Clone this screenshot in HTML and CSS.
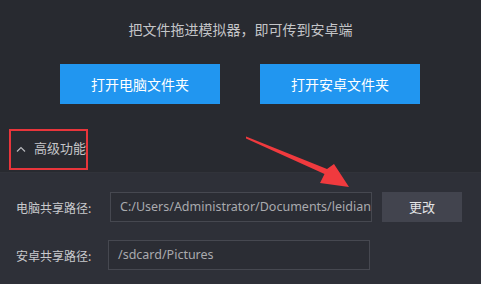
FILE: index.html
```html
<!DOCTYPE html>
<html>
<head>
<meta charset="utf-8">
<link rel="stylesheet" href="styles.css">
</head>
<body>
<div class="win">
  <div class="top">
    <div class="hint">把文件拖进模拟器，即可传到安卓端</div>
    <div class="btns">
      <div class="pbtn">打开电脑文件夹</div>
      <div class="pbtn">打开安卓文件夹</div>
    </div>
    <div class="adv">
      <div class="advbox">
        <svg class="chev" width="10" height="6" viewBox="0 0 10 6"><path d="M1 5.5 L5 1.5 L9 5.5" fill="none" stroke="#b8b9bd" stroke-width="1.2"/></svg>
        <span>高级功能</span>
      </div>
    </div>
  </div>
  <div class="bottom">
    <div class="row r1">
      <div class="label">电脑共享路径:</div>
      <div class="input in1">C:/Users/Administrator/Documents/leidian/Pictures</div>
      <div class="sbtn">更改</div>
    </div>
    <div class="row r2">
      <div class="label">安卓共享路径:</div>
      <div class="input in2">/sdcard/Pictures</div>
    </div>
  </div>
  <svg class="arrow" width="481" height="284" viewBox="0 0 481 284">
    <polygon points="246,136.5 327,169 334,164 349,187 320,183 324.5,174 246,138.5" fill="#f03a3e"/>
  </svg>
</div>
</body>
</html>
```

FILE: styles.css
```css
html, body {
  margin: 0;
  padding: 0;
  background: #282a30;
}
.win {
  position: relative;
  width: 481px;
  height: 284px;
  overflow: hidden;
  font-family: "Noto Sans CJK SC", "Noto Sans", sans-serif;
  color: #c9cacd;
}
.top {
  height: 172px;
  background: #282a30;
  border-bottom: 1px solid #31333a;
  display: flex;
  flex-direction: column;
}
.hint {
  margin-top: 19px;
  text-align: center;
  font-size: 14px;
  line-height: 20px;
  color: #c4c5c8;
}
.btns {
  margin-top: 25px;
  display: flex;
  gap: 40px;
  padding-left: 60px;
}
.pbtn {
  width: 160px;
  height: 40px;
  background: #2196f0;
  color: #ffffff;
  font-size: 14px;
  line-height: 40px;
  text-align: center;
}
.adv {
  margin-top: 25px;
  padding-left: 9px;
}
.advbox {
  width: 75px;
  height: 37px;
  border: 2px solid #e8353b;
  display: flex;
  align-items: center;
  padding-left: 0;
}
.chev {
  margin-left: 5px;
  margin-right: 8px;
  margin-top: -2px;
}
.advbox span {
  font-size: 13px;
  color: #c4c5c8;
  line-height: 18px;
  margin-top: -4px;
}
.bottom {
  background: #2e3038;
  height: 111px;
  padding-top: 19px;
  box-sizing: border-box;
}
.row {
  display: flex;
  align-items: center;
  height: 30px;
}
.r2 {
  margin-top: 18px;
}
.label {
  width: 92px;
  padding-left: 16px;
  box-sizing: border-box;
  font-size: 12px;
  color: #c9cacd;
  white-space: nowrap;
}
.input {
  width: 262px;
  height: 30px;
  box-sizing: border-box;
  border: 1px solid #464850;
  background: #2b2d34;
  font-family: "Noto Sans", sans-serif;
  font-size: 12.5px;
  line-height: 28px;
  color: #a9aaae;
  padding-left: 9px;
  white-space: nowrap;
  overflow: hidden;
}
.in1 {
  margin-left: 18px;
}
.in2 {
  margin-left: 16px;
}
.sbtn {
  margin-left: 10px;
  width: 80px;
  height: 30px;
  background: #42444e;
  color: #e2e3e5;
  font-size: 13px;
  line-height: 30px;
  text-align: center;
}
.arrow {
  position: absolute;
  left: 0;
  top: 0;
  pointer-events: none;
}
```
